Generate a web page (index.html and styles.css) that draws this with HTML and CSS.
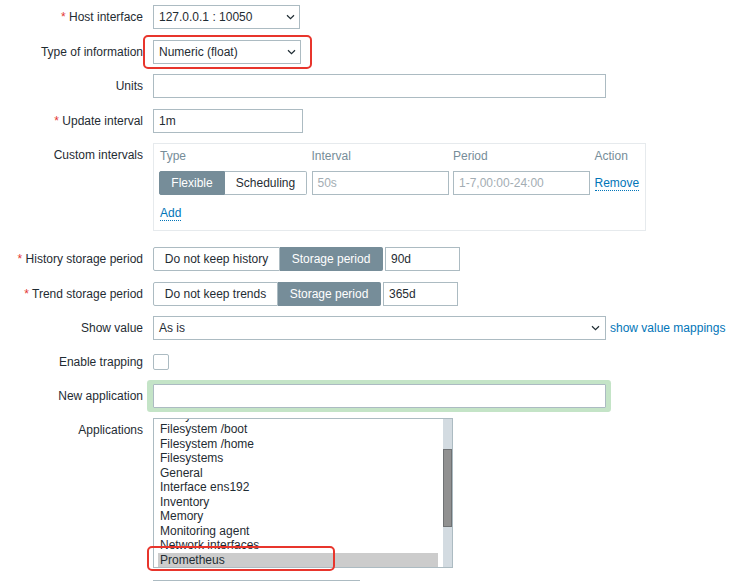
FILE: index.html
```html
<!DOCTYPE html>
<html>
<head>
<meta charset="utf-8">
<link rel="stylesheet" href="styles.css">
</head>
<body>
<div class="form">
  <div class="row">
    <div class="label"><span class="req">*</span> Host interface</div>
    <div class="select w147"><span>127.0.0.1 : 10050</span><svg class="chev" viewBox="0 0 9 6"><path d="M1 1.2 L4.5 4.6 L8 1.2" fill="none" stroke="#1f2c33" stroke-width="1.2"/></svg></div>
  </div>
  <div class="row">
    <div class="label">Type of information</div>
    <div class="select w148"><span>Numeric (float)</span><svg class="chev" viewBox="0 0 9 6"><path d="M1 1.2 L4.5 4.6 L8 1.2" fill="none" stroke="#1f2c33" stroke-width="1.2"/></svg></div>
  </div>
  <div class="row">
    <div class="label">Units</div>
    <div class="input w453"></div>
  </div>
  <div class="row">
    <div class="label"><span class="req">*</span> Update interval</div>
    <div class="input w150">1m</div>
  </div>
  <div class="row row-custom">
    <div class="label">Custom intervals</div>
    <div class="intervals">
      <div class="iv-grid iv-head">
        <div class="iv-type">Type</div>
        <div>Interval</div>
        <div>Period</div>
        <div>Action</div>
      </div>
      <div class="iv-grid iv-ctrls">
        <div class="seg">
          <div class="seg-btn on w66">Flexible</div>
          <div class="seg-btn w82">Scheduling</div>
        </div>
        <div class="input ph">50s</div>
        <div class="input ph">1-7,00:00-24:00</div>
        <div><span class="link">Remove</span></div>
      </div>
      <div class="add-row"><span class="link">Add</span></div>
    </div>
  </div>
  <div class="row">
    <div class="label"><span class="req">*</span> History storage period</div>
    <div class="seg">
      <div class="seg-btn w127">Do not keep history</div>
      <div class="seg-btn on w103">Storage period</div>
    </div>
    <div class="input w75 gap2">90d</div>
  </div>
  <div class="row">
    <div class="label"><span class="req">*</span> Trend storage period</div>
    <div class="seg">
      <div class="seg-btn w125">Do not keep trends</div>
      <div class="seg-btn on w103">Storage period</div>
    </div>
    <div class="input w75 gap2">365d</div>
  </div>
  <div class="row row-mid">
    <div class="label">Show value</div>
    <div class="select w453 pr5"><span>As is</span><svg class="chev" viewBox="0 0 9 6"><path d="M1 1.2 L4.5 4.6 L8 1.2" fill="none" stroke="#1f2c33" stroke-width="1.2"/></svg></div>
    <span class="plain-link">show value mappings</span>
  </div>
  <div class="row row-mid row-check">
    <div class="label">Enable trapping</div>
    <div class="checkbox"></div>
  </div>
  <div class="row">
    <div class="label">New application</div>
    <div class="input w453 highlight"></div>
  </div>
  <div class="row">
    <div class="label">Applications</div>
    <div class="listbox">
      <div class="lb-list">
        <div class="lb-inner">
          <div class="opt">Filesystem /</div>
          <div class="opt">Filesystem /boot</div>
          <div class="opt">Filesystem /home</div>
          <div class="opt">Filesystems</div>
          <div class="opt">General</div>
          <div class="opt">Interface ens192</div>
          <div class="opt">Inventory</div>
          <div class="opt">Memory</div>
          <div class="opt">Monitoring agent</div>
          <div class="opt">Network interfaces</div>
          <div class="opt sel">Prometheus</div>
        </div>
      </div>
      <div class="lb-scroll"><div class="lb-thumb"></div></div>
    </div>
  </div>
  <div class="row row-last">
    <div class="label"></div>
    <div class="next-box"></div>
  </div>
</div>
<div class="mark mark-type"></div>
<div class="mark mark-app"></div>
</body>
</html>
```

FILE: styles.css
```css
* { box-sizing: border-box; }

html, body { background: #fff; }

body {
  margin: 0;
  padding: 5px 0 0 8px;
  width: 741px;
  height: 581px;
  overflow: hidden;
  position: relative;
  font-family: "Liberation Sans", Arial, sans-serif;
  font-size: 12px;
  color: #1f2c33;
}

.form {
  display: flex;
  flex-direction: column;
  gap: 10.5px;
}

.row {
  display: flex;
  align-items: flex-start;
}

.row-mid { align-items: center; }

.row-custom { margin-bottom: 5.5px; }

.row-check { height: 22.5px; }

.row-last { margin-top: 1px; }

.label {
  width: 135px;
  flex: none;
  margin-right: 10px;
  text-align: right;
  line-height: 24px;
  white-space: nowrap;
}

.req { color: #e33734; }

.select,
.input {
  height: 24px;
  border: 1px solid #acbbc2;
  background: #fff;
  display: flex;
  align-items: center;
  padding: 0 5px;
  white-space: nowrap;
  flex: none;
}

.select {
  justify-content: space-between;
  padding-right: 4px;
}

.select.pr5 { padding-right: 5px; }

.chev {
  width: 9px;
  height: 6px;
  flex: none;
}

.w66 { width: 66px; }
.w75 { width: 75px; }
.w82 { width: 82px; }
.w103 { width: 103px; }
.w125 { width: 125px; }
.w127 { width: 127px; }
.w147 { width: 147px; }
.w148 { width: 148px; }
.w150 { width: 150px; }
.w453 { width: 453px; }

.gap2 { margin-left: 2px; }

/* custom intervals */
.intervals {
  width: 493px;
  height: 88px;
  border: 1px solid #e6eaed;
  padding: 4px 5px 0;
}

.iv-grid {
  display: grid;
  grid-template-columns: 148px 137px 137px auto;
  column-gap: 4.5px;
  align-items: center;
}

.iv-head {
  color: #768d99;
  line-height: 17px;
}

.iv-type { padding-left: 1px; }

.iv-ctrls { margin-top: 6px; }

.iv-ctrls .input { width: 100%; }

.ph { color: #a3adb3; }

.add-row {
  margin-top: 11px;
  padding-left: 1px;
  line-height: 14px;
}

.link {
  color: #0275b8;
  border-bottom: 1px dotted #0275b8;
  line-height: 14px;
  display: inline-block;
}

.plain-link {
  color: #0275b8;
  margin-left: 4px;
  white-space: nowrap;
}

/* segmented control */
.seg {
  display: flex;
  height: 24px;
  flex: none;
}

.seg-btn {
  height: 24px;
  border: 1px solid #acbbc2;
  background: #fff;
  display: flex;
  align-items: center;
  justify-content: center;
  white-space: nowrap;
}

.seg-btn + .seg-btn { border-left: none; }

.seg-btn:first-child { border-radius: 2px 0 0 2px; }
.seg-btn:last-child { border-radius: 0 2px 2px 0; }

.seg-btn.on {
  background: #768d99;
  border-color: #768d99;
  color: #fff;
}

/* checkbox */
.checkbox {
  width: 16px;
  height: 16px;
  border: 1px solid #acbbc2;
  border-radius: 2px;
  background: #fff;
}

/* highlighted input */
.highlight {
  border-radius: 1px;
  box-shadow: 0 0 0 4px #c4e4c7, -2px 0 0 4px #c4e4c7, 1px 0 0 4px #c4e4c7;
}

/* listbox */
.listbox {
  width: 300px;
  height: 150px;
  border: 1px solid #acbbc2;
  display: flex;
  overflow: hidden;
  background: #fff;
}

.lb-list {
  flex: 1;
  overflow: hidden;
  padding: 0 5px 0 4px;
}

.lb-inner { margin-top: -11.5px; }

.opt {
  height: 14.5px;
  line-height: 14.5px;
  padding-left: 2px;
  white-space: nowrap;
}

.opt.sel { background: #cccccc; }

.lb-scroll {
  width: 9px;
  flex: none;
  background: #d3dbe1;
  padding-top: 30px;
}

.lb-thumb {
  height: 78px;
  background: #919191;
  border: 1px solid #6f7274;
}

.next-box {
  width: 207px;
  height: 10px;
  border-top: 1px solid #acbbc2;
}

/* annotation marks */
.mark {
  position: absolute;
  border: 2px solid #e8352c;
  border-radius: 5px;
}

.mark-type {
  left: 143px;
  top: 35px;
  width: 169px;
  height: 34px;
}

.mark-app {
  left: 147px;
  top: 546px;
  width: 188px;
  height: 25px;
}
```
